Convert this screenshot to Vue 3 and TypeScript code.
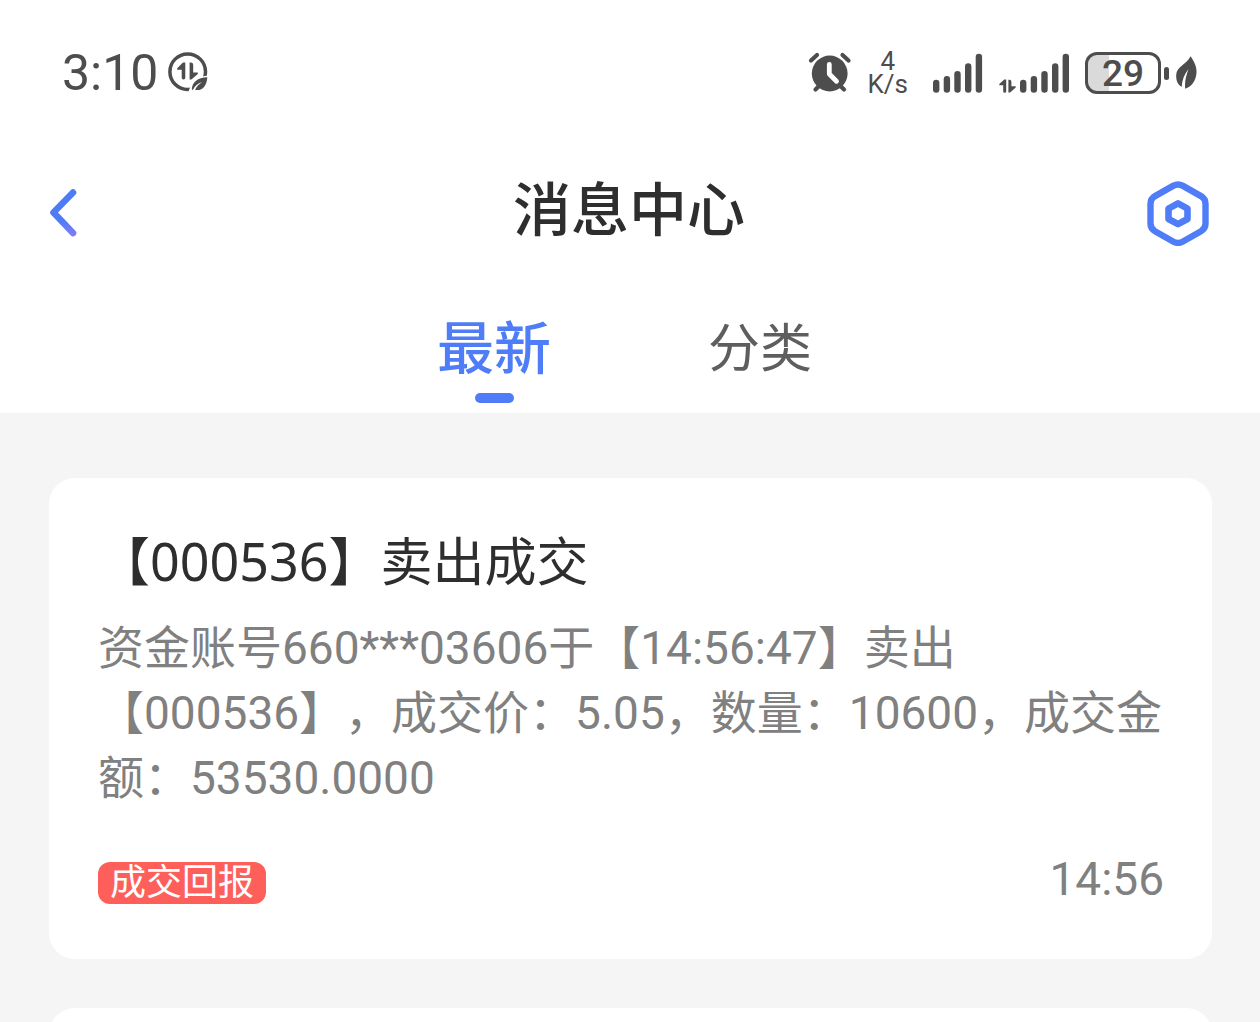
<script setup lang="ts">
import { ref } from 'vue'

interface Message {
  id: number
  title: string
  body: string
  tag: string
  time: string
}

const tabs: string[] = ['最新', '分类']
const activeTab = ref<number>(0)
const networkSpeed = '4\nK/s'

const messages: Message[] = [
  {
    id: 1,
    title: '【000536】卖出成交',
    body: '资金账号660***03606于【14:56:47】卖出【000536】，成交价：5.05，数量：10600，成交金额：53530.0000',
    tag: '成交回报',
    time: '14:56',
  },
]
</script>

<template>
  <div class="screen">
    <div class="status">
      <div class="status-side">
        <span class="clock">3:10</span>
        <svg class="data-saver" width="40" height="42" viewBox="0 0 40 42" aria-hidden="true">
          <circle cx="19.7" cy="19.7" r="17.8" fill="none" stroke="#4d4d4d" stroke-width="3.5" />
          <path d="M17.3 10.6v15.2a1.8 1.8 0 0 1-3.6 0v-8.1H9.2v-1.400l5.800-5.700z" fill="#4d4d4d" />
          <path d="M21.600 10.600h1.200a2.400 2.400 0 0 1 2.400 2.400v7.600h4.600V22l-6.400 5.600h-1.800z" fill="#4d4d4d" />
          <path d="M20 42C22 32 27 25 40 23.500V42z" fill="#fff" />
          <path d="M23.800 37.500c.2-7.500 6-12 15.500-12.300-.3 9-5.800 14.300-12.200 12.600 1.400-3.300 3.800-5.800 7-7.900-4.200 1.400-7.400 4-9.300 8.200z" fill="#4d4d4d" />
        </svg>
      </div>
      <div class="status-side">
        <svg class="alarm" width="44" height="42" viewBox="0 0 44 42" aria-hidden="true">
          <g fill="none" stroke="#4d4d4d" stroke-width="4.200" stroke-linecap="round">
            <path d="M3 8.500l6-5.500M34.500 3l6 5.500M12 33l-4.500 4.500M31.500 33l4.500 4.500" />
          </g>
          <circle cx="21.700" cy="21.500" r="17.900" fill="#4d4d4d" />
          <path d="M21.300 12.500v9.500l7.200 7.200" fill="none" stroke="#fff" stroke-width="4.800" stroke-linecap="round" stroke-linejoin="round" />
        </svg>
        <div class="speed">{{ networkSpeed }}</div>
        <svg class="signal" width="50" height="40" viewBox="0 0 50 40" fill="#4d4d4d" aria-hidden="true">
          <rect x="0" y="26.700" width="6.400" height="13" rx="3.200" />
          <rect x="10.700" y="23" width="6.400" height="16.700" rx="3.200" />
          <rect x="21.300" y="18" width="6.400" height="21.700" rx="3.200" />
          <rect x="32" y="10.300" width="6.400" height="29.400" rx="3.200" />
          <rect x="42.700" y=".7" width="6.400" height="39" rx="3.200" />
        </svg>
        <svg class="signal" width="70" height="40" viewBox="0 0 70 40" fill="#4d4d4d" aria-hidden="true">
          <path d="M7.200 26.500v11.700a1.500 1.500 0 0 1-3 0v-5.900H.3v-1.200l5-4.600z" />
          <path d="M9.400 26.800h1a2 2 0 0 1 2 2v4.500h4.300v1.200l-5.600 5.100H9.400z" />
          <rect x="21" y="26.700" width="6.400" height="13" rx="3.200" />
          <rect x="31.700" y="23" width="6.400" height="16.700" rx="3.200" />
          <rect x="42.300" y="18" width="6.400" height="21.700" rx="3.200" />
          <rect x="53" y="10.300" width="6.400" height="29.400" rx="3.200" />
          <rect x="63.600" y=".7" width="6.400" height="39" rx="3.200" />
        </svg>
        <div class="battery">29</div>
        <div class="battery-nub"></div>
        <svg class="leaf" width="21" height="34" viewBox="0 0 21 34" fill="#4d4d4d" aria-hidden="true">
          <path d="M14.600.3c2.700 4.200 6.300 9.500 5.900 16.200-.4 8-5 14.500-11.300 16.200-.7-6.900.8-12.600 3.300-19.700C8.200 18.500 6 24.500 5.700 30.800 1.600 28.500-.1 24.300.2 18.700.6 10.800 10.600 8.300 14.600.3z" />
        </svg>
      </div>
    </div>

    <header class="nav">
      <button class="icon-button" type="button" aria-label="返回">
        <svg width="28" height="50" viewBox="0 0 28 50" aria-hidden="true">
          <defs>
            <linearGradient id="back-tint" x1="0" y1="0" x2="0" y2="1">
              <stop offset=".7" stop-color="#4e7cf6" />
              <stop offset="1" stop-color="#7b7bf2" />
            </linearGradient>
          </defs>
          <path d="M24 4.500L4.500 24.500L24 45" fill="none" stroke="url(#back-tint)" stroke-width="6.600" stroke-linecap="round" stroke-linejoin="round" />
        </svg>
      </button>
      <h1>消息中心</h1>
      <button class="icon-button end" type="button" aria-label="设置">
        <svg width="62" height="66" viewBox="0 0 62 66" fill="none" stroke="#4f7df7" stroke-linejoin="round" aria-hidden="true">
          <path d="M26.500 5.600Q31 3.200 35.500 5.600L54 16.100Q58.500 18.800 58.500 23.800V43.800Q58.500 48.500 54 51.200L35.500 61.700Q31 64.100 26.500 61.700L8 51.200Q3.500 48.500 3.500 43.800V23.800Q3.500 18.800 8 16.100Z" stroke-width="6.400" />
          <path d="M31 23.400L40.500 28.600V39L31 44.200L21.500 39V28.600Z" stroke-width="6.600" />
        </svg>
      </button>
    </header>

    <nav class="tabs">
      <button
        v-for="(tab, i) in tabs"
        :key="tab"
        type="button"
        class="tab"
        :class="{ active: i === activeTab }"
        @click="activeTab = i"
      >
        {{ tab }}
      </button>
    </nav>

    <main class="feed">
      <article v-for="m in messages" :key="m.id" class="card">
        <h2>{{ m.title }}</h2>
        <p>{{ m.body }}</p>
        <footer>
          <span class="tag">{{ m.tag }}</span>
          <time>{{ m.time }}</time>
        </footer>
      </article>
      <article class="card"></article>
    </main>
  </div>
</template>

<style>
body {
  margin: 0;
  background: #f5f5f5;
}
</style>

<style scoped>
.screen {
  display: flex;
  flex-direction: column;
  height: 100vh;
  overflow: hidden;
  background: #fff;
  font-family: Roboto, "Noto Sans CJK SC", sans-serif;
  text-spacing-trim: space-all;
}
.status {
  display: flex;
  flex: none;
  align-items: center;
  justify-content: space-between;
  height: 146px;
  padding: 0 63px 0 62px;
  color: #4d4d4d;
}
.status-side {
  display: flex;
  align-items: center;
}
.clock {
  font-size: 50px;
  line-height: 60px;
}
.data-saver {
  margin-left: 10px;
}
.speed {
  margin: 0 9px 0 16px;
  font-size: 26px;
  line-height: 23px;
  text-align: center;
  white-space: pre-line;
}
.signal {
  margin-left: 16px;
}
.battery {
  box-sizing: border-box;
  width: 76px;
  height: 42px;
  margin-left: 16px;
  border: 3px solid #4d4d4d;
  border-radius: 12px;
  background: linear-gradient(90deg, #dadada 30%, #fff 30%);
  font-size: 37px;
  font-weight: 500;
  line-height: 38px;
  text-align: center;
}
.battery-nub {
  width: 5px;
  height: 13px;
  margin: 0 7px 0 3px;
  border-radius: 3px;
  background: #4d4d4d;
}
.nav {
  display: grid;
  flex: none;
  grid-template-columns: 1fr auto 1fr;
  align-items: center;
  height: 134px;
  padding: 0 51px 0 49px;
}
h1 {
  margin: 0;
  padding-bottom: 4px;
  color: #2e2e2e;
  font-size: 58px;
  font-weight: 500;
  line-height: 80px;
}
button {
  padding: 0;
  border: 0;
  background: none;
  font-family: inherit;
  cursor: pointer;
}
.icon-button {
  display: flex;
  justify-self: start;
}
.icon-button.end {
  justify-self: end;
}
.tabs {
  display: flex;
  flex: none;
  justify-content: center;
  gap: 150px;
  height: 133px;
  padding-right: 6px;
}
.tab {
  display: flex;
  flex-direction: column;
  align-items: center;
  width: 116px;
  color: #5e5e5e;
  font-size: 52px;
  line-height: 140px;
  white-space: nowrap;
}
.tab.active {
  color: #4f7df7;
  font-size: 57px;
  font-weight: 500;
}
.tab.active::after {
  width: 39px;
  height: 10px;
  margin-top: -27px;
  border-radius: 5px;
  background: #4f7df7;
  content: "";
}
.feed {
  display: flex;
  flex: 1;
  flex-direction: column;
  gap: 49px;
  min-height: 0;
  padding: 65px 48px 0 49px;
  overflow: hidden;
  background: #f5f5f5;
}
.card {
  flex: none;
  box-sizing: border-box;
  min-height: 481px;
  padding: 48px 48px 48px 49px;
  border-radius: 26px;
  background: #fff;
}
h2 {
  margin: 0 0 20px;
  color: #2e2e2e;
  font-family: "Noto Sans", "Noto Sans CJK SC", sans-serif;
  font-size: 52px;
  font-weight: 400;
  line-height: 70px;
}
p {
  margin: 0 -4px 0 0;
  color: #808080;
  font-size: 46px;
  line-height: 65px;
}
footer {
  display: flex;
  align-items: baseline;
  justify-content: space-between;
  margin-top: 36px;
  color: #808080;
}
.tag {
  padding: 0 12px;
  border-radius: 12px;
  background: #ff5f5a;
  color: #fff;
  font-size: 36px;
  line-height: 42px;
}
time {
  font-size: 46px;
  line-height: 64px;
}
</style>
